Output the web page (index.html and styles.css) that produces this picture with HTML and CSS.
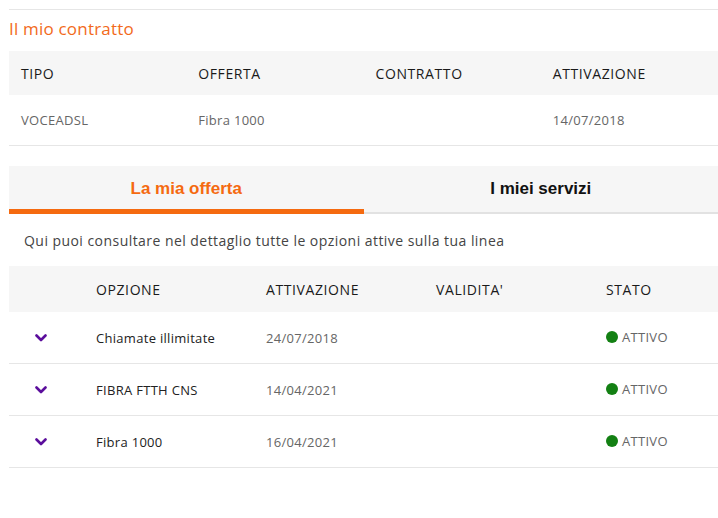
FILE: index.html
```html
<!DOCTYPE html>
<html lang="it">
<head>
  <meta charset="UTF-8" />
  <title>Il mio contratto</title>
  <link rel="stylesheet" href="styles.css">
</head>
<body>
  <div class="page">
    <h2 class="section-title">Il mio contratto</h2>

    <table class="contract">
      <thead>
        <tr>
          <th>TIPO</th>
          <th>OFFERTA</th>
          <th>CONTRATTO</th>
          <th>ATTIVAZIONE</th>
        </tr>
      </thead>
      <tbody>
        <tr>
          <td>VOCEADSL</td>
          <td>Fibra 1000</td>
          <td></td>
          <td>14/07/2018</td>
        </tr>
      </tbody>
    </table>

    <div class="tabs">
      <div class="tab active">La mia offerta</div>
      <div class="tab">I miei servizi</div>
    </div>

    <p class="intro">Qui puoi consultare nel dettaglio tutte le opzioni attive sulla tua linea</p>

    <table class="options">
      <thead>
        <tr>
          <th class="col-toggle"></th>
          <th class="col-name">OPZIONE</th>
          <th class="col-date">ATTIVAZIONE</th>
          <th class="col-date">VALIDITA'</th>
          <th>STATO</th>
        </tr>
      </thead>
      <tbody>
        <tr>
          <td class="col-toggle"><svg class="chevron" viewBox="0 0 12 8"><path d="M1.5 1.5 L6 6 L10.5 1.5" /></svg></td>
          <td class="name">Chiamate illimitate</td>
          <td>24/07/2018</td>
          <td></td>
          <td><span class="status"><span class="dot"></span>ATTIVO</span></td>
        </tr>
        <tr>
          <td class="col-toggle"><svg class="chevron" viewBox="0 0 12 8"><path d="M1.5 1.5 L6 6 L10.5 1.5" /></svg></td>
          <td class="name">FIBRA FTTH CNS</td>
          <td>14/04/2021</td>
          <td></td>
          <td><span class="status"><span class="dot"></span>ATTIVO</span></td>
        </tr>
        <tr>
          <td class="col-toggle"><svg class="chevron" viewBox="0 0 12 8"><path d="M1.5 1.5 L6 6 L10.5 1.5" /></svg></td>
          <td class="name">Fibra 1000</td>
          <td>16/04/2021</td>
          <td></td>
          <td><span class="status"><span class="dot"></span>ATTIVO</span></td>
        </tr>
      </tbody>
    </table>
  </div>
</body>
</html>
```

FILE: styles.css
```css
html, body {
  margin: 0;
  padding: 0;
  background: #fff;
  font-family: 'Open Sans', sans-serif;
  color: #222;
}

.page {
  padding: 9px 0 0 9px;
}

.section-title {
  margin: 0;
  border-top: 1px solid #e6e6e6;
  padding: 9px 0 12px;
  font-size: 17px;
  font-weight: normal;
  color: #f26a1b;
  line-height: 20px;
  letter-spacing: 0.2px;
}

table {
  width: 100%;
  border-collapse: collapse;
  table-layout: fixed;
}

th {
  text-align: left;
  font-weight: 500;
  font-size: 14px;
  letter-spacing: 0.6px;
  color: #1a1a1a;
  background: #f6f6f6;
  padding: 0 0 0 12px;
}

td {
  font-size: 13px;
  letter-spacing: 0.3px;
  color: #666;
  padding: 0 0 0 12px;
}

.contract th {
  height: 44px;
}

.contract td {
  height: 50px;
  border-bottom: 1px solid #e6e6e6;
}

.tabs {
  display: flex;
  margin-top: 20px;
  background: #f6f6f6;
  border-bottom: 2px solid #e2e2e2;
}

.tab {
  flex: 1;
  text-align: center;
  font-family: 'Liberation Sans', Arial, sans-serif;
  font-weight: bold;
  font-size: 17px;
  color: #111;
  line-height: 20px;
  padding: 13px 0 15px;
  margin-bottom: -2px;
}

.tab.active {
  color: #f56a10;
  border-bottom: 5px solid #f56a10;
  padding-bottom: 10px;
}

.intro {
  margin: 0;
  padding: 17px 0 16px 15px;
  font-size: 14px;
  letter-spacing: 0.45px;
  color: #444;
}

.options th {
  height: 46px;
}

.options .col-toggle {
  width: 63px;
  text-align: center;
  padding-left: 0;
  padding-right: 12px;
}

.options .col-name,
.options .col-date {
  width: 158px;
}

.options td {
  height: 51px;
  border-bottom: 1px solid #e6e6e6;
}

.options td.name {
  color: #222;
}

.chevron {
  width: 12px;
  height: 8px;
  fill: none;
  stroke: #5b0e9c;
  stroke-width: 2.6;
  stroke-linecap: round;
  stroke-linejoin: round;
  display: block;
  margin: 0 auto;
}

.status {
  display: inline-flex;
  align-items: center;
  gap: 4px;
}

.dot {
  width: 12px;
  height: 12px;
  border-radius: 50%;
  background: #138013;
}
```
